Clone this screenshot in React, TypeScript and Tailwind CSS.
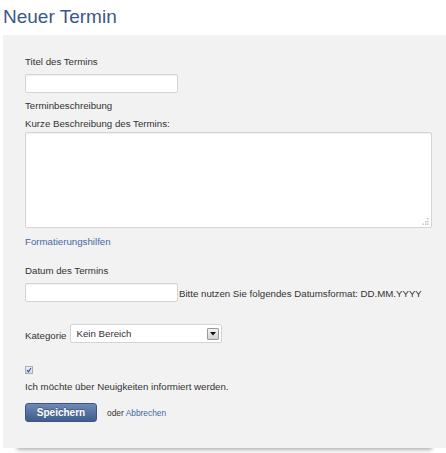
import { useState } from "react";

const font = { fontFamily: '"Liberation Sans", Arial, sans-serif' };

const Label = ({ children, className = "" }: { children: React.ReactNode; className?: string }) => (
  <div className={`text-[9.7px] leading-[12px] text-[#333] ${className}`}>{children}</div>
);

const inputCls =
  "block bg-white border border-[#d4d4d4] rounded-[2px] shadow-[inset_0_1px_1px_rgba(0,0,0,0.06)] outline-none text-[9.7px] px-1";

export default function App() {
  const [checked, setChecked] = useState(true);

  return (
    <div className="bg-white w-[446px] h-[453px] overflow-hidden" style={font}>
      <h1 className="pl-[3px] text-[19px] leading-[34px] text-[#3d5688] font-normal">Neuer Termin</h1>

      {/* Form panel */}
      <div className="ml-[3px] mt-px bg-[#f2f2f2] pl-[22px] pt-[21px] pb-[26px] shadow-[0_16px_4px_-14px_rgba(0,0,0,0.3)]">
        <Label>Titel des Termins</Label>
        <input className={`${inputCls} mt-[6px] w-[153px] h-[19px]`} />

        <Label className="mt-[7px]">Terminbeschreibung</Label>
        <Label className="mt-[6px]">Kurze Beschreibung des Termins:</Label>
        <div className="relative mt-[2px] w-[407px] h-[96px]">
          <textarea className={`${inputCls} w-full h-full resize-none`} />
          {/* resize grip */}
          <svg className="absolute right-[3px] bottom-[3px]" width="7" height="7" viewBox="0 0 7 7">
            <rect x="5" y="0" width="1.4" height="1.4" fill="#bbb" />
            <rect x="3" y="3" width="1.4" height="1.4" fill="#bbb" />
            <rect x="5" y="3" width="1.4" height="1.4" fill="#bbb" />
            <rect x="0.5" y="5.5" width="1.4" height="1.4" fill="#bbb" />
            <rect x="3" y="5.5" width="1.4" height="1.4" fill="#bbb" />
            <rect x="5" y="5.5" width="1.4" height="1.4" fill="#bbb" />
          </svg>
        </div>
        <a className="block mt-[8px] text-[9.7px] leading-[12px] text-[#3f6aa3]">Formatierungshilfen</a>

        <Label className="mt-[17px]">Datum des Termins</Label>
        <div className="flex items-end mt-[6px] h-[19px]">
          <input className={`${inputCls} w-[153px] h-[19px]`} />
          <span className="text-[9.7px] leading-[12px] text-[#333] pl-px mb-[2px]">
            Bitte nutzen Sie folgendes Datumsformat: DD.MM.YYYY
          </span>
        </div>

        <div className="flex items-end gap-[4px] mt-[22px] h-[19px]">
          <span className="text-[9.7px] leading-[12px] text-[#333] mb-[1px]">Kategorie</span>
          <div className="flex items-center justify-between w-[152px] h-[19px] bg-white border border-[#d4d4d4] rounded-[2px] pl-[5px] pr-[2px]">
            <span className="text-[9.7px] text-[#333] leading-[12px]">Kein Bereich</span>
            <span className="flex items-center justify-center w-[12px] h-[12px] border border-[#9a9a9a] rounded-[1px] bg-[linear-gradient(#f4f4f4,#d2d2d2)]">
              <svg width="6" height="4" viewBox="0 0 6 4">
                <path d="M0 0H6L3 3.5Z" fill="#111" />
              </svg>
            </span>
          </div>
        </div>

        <button
          onClick={() => setChecked(!checked)}
          className="mt-[23px] flex items-center justify-center w-[8px] h-[8px] border border-[#a3aec0] bg-[linear-gradient(#eef1f6,#d3dbe6)]"
        >
          {checked && (
            <svg width="6" height="6" viewBox="0 0 6 6">
              <path d="M1 3.2L2.4 4.8L5 1" stroke="#2a4f9c" strokeWidth="1.1" fill="none" />
            </svg>
          )}
        </button>
        <Label className="mt-[7px]">Ich möchte über Neuigkeiten informiert werden.</Label>

        <div className="flex items-center mt-[10px]">
          <button className="w-[72px] h-[19px] rounded-[3px] border border-[#3b5584] bg-[linear-gradient(#7089b5,#3f5c8d)] text-white font-bold text-[10px] leading-[12px] [text-shadow:0_-1px_0_rgba(0,0,0,0.3)]">
            Speichern
          </button>
          <span className="ml-[10px] text-[8.4px] text-[#333] leading-[12px]">
            oder <a className="text-[#3f6aa3]">Abbrechen</a>
          </span>
        </div>
      </div>
    </div>
  );
}
